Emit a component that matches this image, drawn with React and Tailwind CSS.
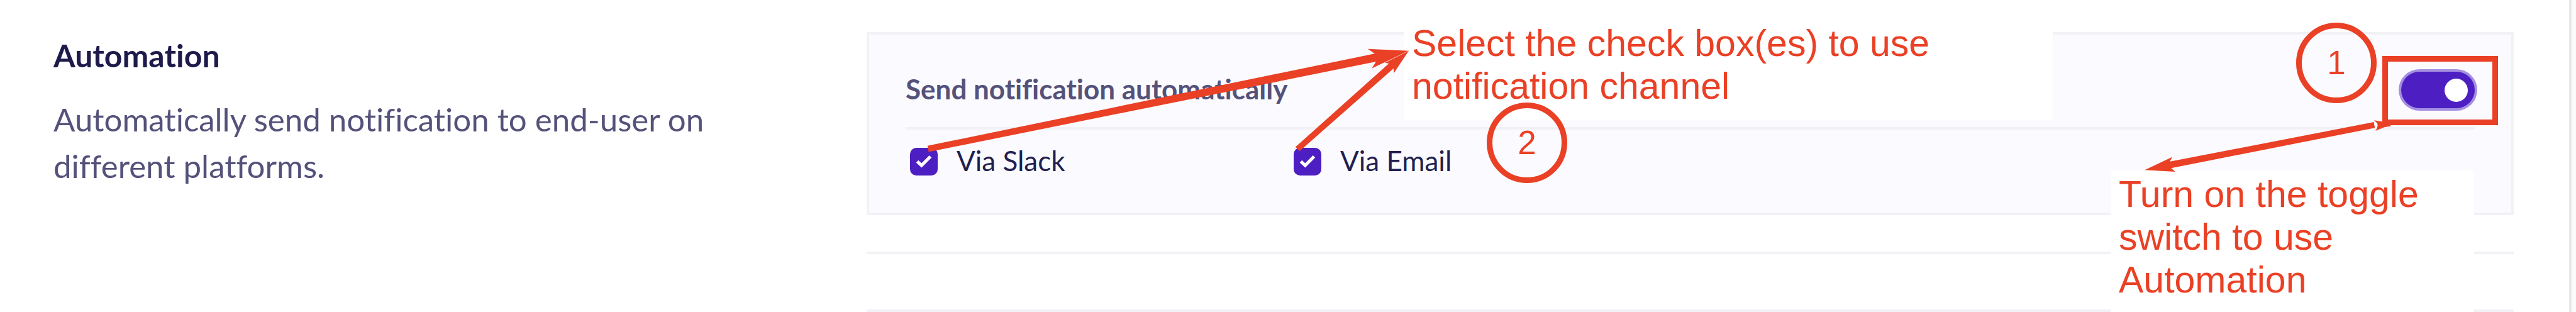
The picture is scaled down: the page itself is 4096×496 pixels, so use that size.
import { useState } from "react";

function Channel({ id, label }) {
  return (
    <div className="flex w-[610px] items-center gap-[30px]">
      <span className="grid size-11 shrink-0 place-items-center">
        <input
          id={id}
          type="checkbox"
          defaultChecked
          className="peer col-start-1 row-start-1 size-11 appearance-none rounded-[10px] border-4 border-[#4d1fc3] bg-white checked:bg-[#4d1fc3]"
        />
        <svg
          viewBox="0 0 48 48"
          aria-hidden="true"
          className="pointer-events-none col-start-1 row-start-1 hidden size-11 peer-checked:block"
        >
          <path
            d="M12.5 23.5 L20 30.5 L35.5 15"
            fill="none"
            stroke="#fff"
            strokeWidth="5.5"
            strokeLinejoin="miter"
          />
        </svg>
      </span>
      <label htmlFor={id} className="pb-1 text-[44px] leading-[40px] whitespace-nowrap text-[#211f50]">
        {label}
      </label>
    </div>
  );
}

function Step({ children, className }) {
  return (
    <div
      className={
        "absolute flex size-32 items-center justify-center rounded-full border-[9px] border-[#ea4025] font-[Liberation_Sans,sans-serif] text-[53px] leading-[60px] text-[#ea4025] " +
        className
      }
    >
      {children}
    </div>
  );
}

function Note({ children, className }) {
  return (
    <p
      className={
        "absolute bg-white font-[Liberation_Sans,sans-serif] text-[59px] leading-[68px] text-[#ea4025] " +
        className
      }
    >
      {children}
    </p>
  );
}

export default function App() {
  const [on, setOn] = useState(true);

  return (
    <div className="flex h-screen overflow-hidden bg-white font-[Lato,sans-serif] [font-variant-ligatures:none]">
      <main className="flex min-w-0 flex-1 pt-[51px] pr-[88px] pl-[85px]">
        <header className="w-[1293px] shrink-0">
          <h2 className="text-[50px] leading-[74px] font-bold text-[#1e1b4b]">Automation</h2>
          <p className="mt-[28px] w-[1080px] text-[51px] leading-[74px] text-[#54527a]">
            Automatically send notification to end-user on different platforms.
          </p>
        </header>

        <div className="relative min-w-0 flex-1">
          <section className="border-4 border-[#f1f1f6] bg-[#fbfaff] px-[58px] pt-[59px] pb-[59px]">
            <div className="flex h-[58px] items-center justify-between">
              <label
                htmlFor="auto-send"
                className="pb-1 text-[44px] leading-[58px] font-bold whitespace-nowrap text-[#54527a]"
              >
                Send notification automatically
              </label>
              <button
                id="auto-send"
                type="button"
                role="switch"
                aria-checked={on}
                onClick={() => setOn(!on)}
                className={
                  "flex h-[58px] w-[117px] items-center rounded-full px-[11px] ring-4 ring-[#a58fe1] " +
                  (on ? "justify-end bg-[#4d1fc3]" : "justify-start bg-[#b9b8c9]")
                }
              >
                <span className="size-[37px] rounded-full bg-white" />
              </button>
            </div>
            <hr className="mt-[30px] border-t-4 border-[#f1f1f6]" />
            <div className="mt-[29px] flex pl-[7px]">
              <Channel id="via-slack" label="Via Slack" />
              <Channel id="via-email" label="Via Email" />
            </div>
          </section>
          <hr className="mt-[58px] border-t-4 border-[#f1f1f6]" />
          <hr className="mt-[88px] border-t-4 border-[#f1f1f6]" />

          {/* Callouts anchored to the card's left side */}
          <div className="pointer-events-none absolute top-0 left-0">
            <Note className="-top-4 left-[854px] h-[156px] w-[1032px] pr-[120px] pl-[13px]">
              Select the check box(es) to use notification channel
            </Note>
            <svg
              viewBox="1500 56 1000 220"
              aria-hidden="true"
              className="absolute top-0 left-0 h-[202px] w-[918px]"
              fill="#ea4025"
            >
              <path d="M1605.5 253 L2380 93.3 L2368 85 L2439 88.3 L2375 119 L2382.3 107.3 L1607.5 263.5 Z" />
              <path d="M2242.7 255 L2404.5 110.5 L2397.5 109 L2439 88.3 L2413 127.3 L2412.7 119 L2250 262 Z" />
              <path d="M2397.5 109 L2439 88.3" stroke="#f7b5a8" strokeWidth="0.8" />
            </svg>
            <Step className="top-[112px] left-[986px]">2</Step>
          </div>

          {/* Callouts anchored to the card's right side */}
          <div className="pointer-events-none absolute top-0 right-0">
            <Step className="-top-[15px] right-[218px]">1</Step>
            <div className="absolute top-[38px] right-[25px] h-[110px] w-[184px] border-[9px] border-[#ea4025]" />
            <Note className="top-[220px] right-[63px] h-[225px] w-[578px] pt-[4px] pr-[60px] pl-[13px]">
              Turn on the toggle switch to use Automation
            </Note>
            <svg
              viewBox="3652 56 700 260"
              aria-hidden="true"
              className="absolute top-0 right-0 h-[239px] w-[643px]"
              fill="#ea4025"
            >
              <path d="M3713.3 294.7 L3761 272 L3756.7 280 L4110 211.7 L4111.7 221.7 L3759 291.3 L3766 297.7 Z" />
              <path d="M4110 211.7 L4115 213 L4117 221 L4111.7 221.7 Z" fill="#fff" />
              <path d="M4110 208.7 L4126 211 L4139 216 L4139 218.7 L4128 220.5 L4112.7 226.7 Q4119 217 4115 213 Z" />
            </svg>
          </div>
        </div>
      </main>
      <div className="w-[11px] shrink-0 border-l-4 border-[#e8e8e9] bg-[#fafafa]" />
    </div>
  );
}
